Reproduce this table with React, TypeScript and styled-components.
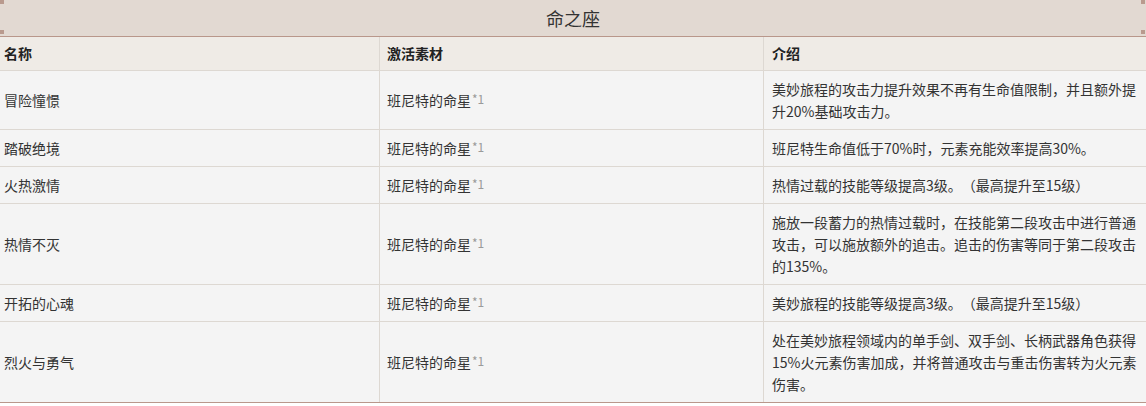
import React from "react";
import styled, { createGlobalStyle } from "styled-components";

const Global = createGlobalStyle`
  html, body { margin: 0; padding: 0; background: #ffffff; }
  body {
    font-family: "Microsoft YaHei", "Noto Sans CJK SC", "Noto Sans", sans-serif;
    color: #333;
    text-spacing-trim: space-all;
  }
  * { box-sizing: border-box; }
`;

const Wrap = styled.div`
  width: 1146px;
  background: #f4f4f4;
  border-bottom: 1px solid #b9978b;
`;

const Title = styled.div`
  position: relative;
  height: 37px;
  line-height: 36px;
  text-align: center;
  font-size: 18px;
  color: #333;
  background: #e2d9d2;
  border-bottom: 1px solid #b9978b;
`;

const Dot = styled.span<{ $right?: boolean; $bottom?: boolean }>`
  position: absolute;
  width: 4px;
  height: 4px;
  background: #b99a8e;
  ${(p) => (p.$right ? "right: 1px;" : "left: 0;")}
  ${(p) => (p.$bottom ? "top: 30px;" : "top: 0;")}
`;

const Row = styled.div<{ $head?: boolean }>`
  display: grid;
  grid-template-columns: 379px 384px 1fr;
  background: ${(p) => (p.$head ? "#efebe6" : "#f4f4f4")};
  border-bottom: 1px solid #ddd8d2;
  &:last-child { border-bottom: none; }
`;

const Cell = styled.div<{ $col: number; $head?: boolean }>`
  display: flex;
  align-items: center;
  font-size: 14px;
  line-height: 22px;
  padding: ${(p) => (p.$head ? "5px 8px 6px" : "7px 8px")};
  padding-left: ${(p) => (p.$col === 0 ? 4 : p.$col === 1 ? 7 : 8)}px;
  border-left: ${(p) => (p.$col === 0 ? "none" : "1px solid #ddd8d2")};
  font-weight: ${(p) => (p.$head ? 700 : 400)};
  color: ${(p) => (p.$head ? "#222" : "#333")};
`;

const Text = styled.span`
  display: block;
`;

const Qty = styled.span`
  font-size: 12px;
  line-height: 0;
  color: #9a9a9a;
  vertical-align: 2px;
  margin-left: 1px;
`;

const rows: { name: string; desc: React.ReactNode }[] = [
  { name: "冒险憧憬", desc: "美妙旅程的攻击力提升效果不再有生命值限制，并且额外提升20%基础攻击力。" },
  { name: "踏破绝境", desc: "班尼特生命值低于70%时，元素充能效率提高30%。" },
  { name: "火热激情", desc: "热情过载的技能等级提高3级。（最高提升至15级）" },
  {
    name: "热情不灭",
    desc: "施放一段蓄力的热情过载时，在技能第二段攻击中进行普通攻击，可以施放额外的追击。追击的伤害等同于第二段攻击的135%。",
  },
  { name: "开拓的心魂", desc: "美妙旅程的技能等级提高3级。（最高提升至15级）" },
  {
    name: "烈火与勇气",
    desc: (
      <>
        处在美妙旅程领域内的单手剑、双手剑、长柄武器角色获得15%火元素伤害加成，并将普通攻击与重击伤害转为火元素
        <br />
        伤害。
      </>
    ),
  },
];

export default function App() {
  return (
    <>
      <Global />
      <Wrap>
        <Title>
          命之座
          <Dot />
          <Dot $bottom />
          <Dot $right />
          <Dot $right $bottom />
        </Title>
        <Row $head>
          <Cell $col={0} $head>名称</Cell>
          <Cell $col={1} $head>激活素材</Cell>
          <Cell $col={2} $head>介绍</Cell>
        </Row>
        {rows.map((r) => (
          <Row key={r.name}>
            <Cell $col={0}>{r.name}</Cell>
            <Cell $col={1}>
              <Text>
                班尼特的命星<Qty>*1</Qty>
              </Text>
            </Cell>
            <Cell $col={2}>
              <Text>{r.desc}</Text>
            </Cell>
          </Row>
        ))}
      </Wrap>
    </>
  );
}
